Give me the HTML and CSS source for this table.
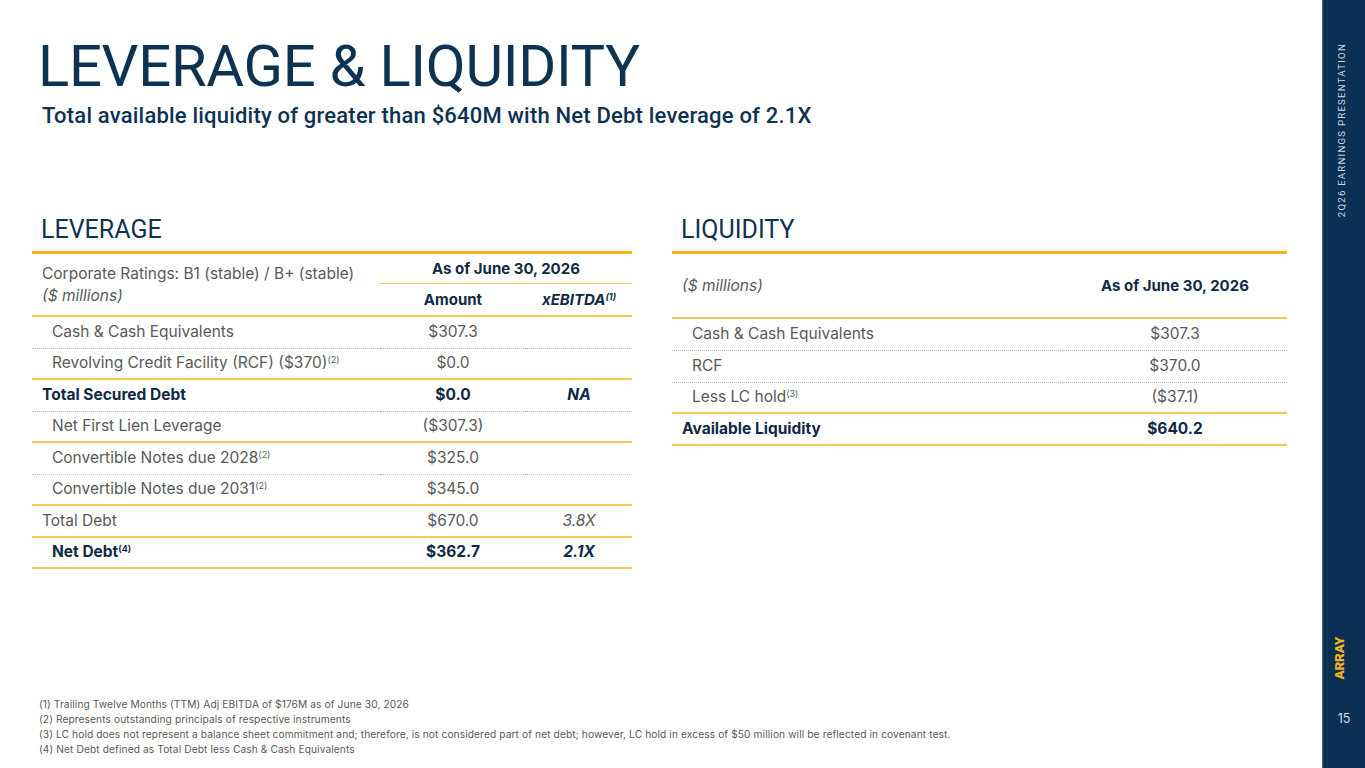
FILE: index.html
```html
<!DOCTYPE html>
<html lang="en">
<head>
<meta charset="utf-8">
<title>Leverage &amp; Liquidity</title>
<link rel="stylesheet" href="styles.css">
</head>
<body>
<div class="slide">
  <main class="content">
    <h1 class="title">LEVERAGE &amp; LIQUIDITY</h1>
    <p class="subtitle">Total available liquidity of greater than $640M with Net Debt leverage of 2.1X</p>

    <div class="panels">
      <section class="panel panel-left">
        <h2 class="panel-title">LEVERAGE</h2>
        <table class="tbl tbl-lev">
          <colgroup>
            <col class="c-label-l">
            <col class="c-amt">
            <col class="c-x">
          </colgroup>
          <thead>
            <tr class="h1row">
              <th class="hlabel" rowspan="2">
                <span class="hl-line">Corporate Ratings: B1 (stable) / B+ (stable)</span>
                <span class="hl-line hl-it">($ millions)</span>
              </th>
              <th class="asof" colspan="2">As of June 30, 2026</th>
            </tr>
            <tr class="h2row">
              <th class="hcol">Amount</th>
              <th class="hcol hcol-it">xEBITDA<sup class="fn fn-b">(1)</sup></th>
            </tr>
          </thead>
          <tbody>
            <tr class="r dot">
              <td class="lbl sub">Cash &amp; Cash Equivalents</td>
              <td class="num">$307.3</td>
              <td class="num"></td>
            </tr>
            <tr class="r gold">
              <td class="lbl sub">Revolving Credit Facility (RCF) ($370)<sup class="fn">(2)</sup></td>
              <td class="num">$0.0</td>
              <td class="num"></td>
            </tr>
            <tr class="r dot strong">
              <td class="lbl">Total Secured Debt</td>
              <td class="num">$0.0</td>
              <td class="num it">NA</td>
            </tr>
            <tr class="r gold">
              <td class="lbl sub">Net First Lien Leverage</td>
              <td class="num">($307.3)</td>
              <td class="num"></td>
            </tr>
            <tr class="r dot">
              <td class="lbl sub">Convertible Notes due 2028<sup class="fn">(2)</sup></td>
              <td class="num">$325.0</td>
              <td class="num"></td>
            </tr>
            <tr class="r gold">
              <td class="lbl sub">Convertible Notes due 2031<sup class="fn">(2)</sup></td>
              <td class="num">$345.0</td>
              <td class="num"></td>
            </tr>
            <tr class="r gold">
              <td class="lbl">Total Debt</td>
              <td class="num">$670.0</td>
              <td class="num it">3.8X</td>
            </tr>
            <tr class="r gold strong">
              <td class="lbl sub">Net Debt<sup class="fn fn-b">(4)</sup></td>
              <td class="num">$362.7</td>
              <td class="num it">2.1X</td>
            </tr>
          </tbody>
        </table>
      </section>

      <section class="panel panel-right">
        <h2 class="panel-title">LIQUIDITY</h2>
        <table class="tbl tbl-liq">
          <colgroup>
            <col class="c-label-r">
            <col class="c-val">
          </colgroup>
          <thead>
            <tr class="hrow-liq">
              <th class="hlabel"><span class="hl-it">($ millions)</span></th>
              <th class="asof-r">As of June 30, 2026</th>
            </tr>
          </thead>
          <tbody>
            <tr class="r dot">
              <td class="lbl sub">Cash &amp; Cash Equivalents</td>
              <td class="num">$307.3</td>
            </tr>
            <tr class="r dot">
              <td class="lbl sub">RCF</td>
              <td class="num">$370.0</td>
            </tr>
            <tr class="r gold">
              <td class="lbl sub">Less LC hold<sup class="fn">(3)</sup></td>
              <td class="num">($37.1)</td>
            </tr>
            <tr class="r gold strong">
              <td class="lbl">Available Liquidity</td>
              <td class="num">$640.2</td>
            </tr>
          </tbody>
        </table>
      </section>
    </div>

    <div class="footnotes">
      <p>(1) Trailing Twelve Months (TTM) Adj EBITDA of $176M as of June 30, 2026</p>
      <p>(2) Represents outstanding principals of respective instruments</p>
      <p>(3) LC hold does not represent a balance sheet commitment and; therefore, is not considered part of net debt; however, LC hold in excess of $50 million will be reflected in covenant test.</p>
      <p>(4) Net Debt defined as Total Debt less Cash &amp; Cash Equivalents</p>
    </div>
  </main>

  <aside class="sidebar">
    <div class="side-title">2Q26 EARNINGS PRESENTATION</div>
    <div class="side-logo">ARRAY</div>
    <div class="side-page">15</div>
  </aside>
</div>
</body>
</html>
```

FILE: styles.css
```css
* { box-sizing: border-box; }

html, body {
  margin: 0;
  padding: 0;
  background: #ffffff;
}

body {
  font-family: "Inter", "Roboto", "Liberation Sans", sans-serif;
  color: #595959;
}

.slide {
  width: 1365px;
  height: 768px;
  display: flex;
  overflow: hidden;
}

/* ---------- main content ---------- */
.content {
  flex: 1;
  display: flex;
  flex-direction: column;
  padding: 37px 35px 11px 32px;
}

.title {
  margin: 0;
  padding-left: 6px;
  font-family: "Roboto", "Liberation Sans", sans-serif;
  font-weight: 400;
  font-size: 58px;
  line-height: 58px;
  letter-spacing: -0.3px;
  color: #0d3353;
}

.subtitle {
  margin: 10px 0 0;
  padding-left: 10px;
  font-family: "Roboto", "Liberation Sans", sans-serif;
  font-weight: 500;
  font-size: 22px;
  line-height: 22px;
  letter-spacing: 0.2px;
  color: #0d3353;
}

.panels {
  display: flex;
  gap: 40px;
  margin-top: 90px;
}

.panel-left { width: 600px; }
.panel-right { width: 615px; }

.panel-title {
  margin: 0 0 9px;
  padding-left: 9px;
  font-family: "Roboto", "Liberation Sans", sans-serif;
  font-weight: 400;
  font-size: 25px;
  line-height: 25px;
  color: #0d3353;
}

/* ---------- tables ---------- */
.tbl {
  width: 100%;
  border-collapse: separate;
  border-spacing: 0;
  border-top: 3px solid #f4b41a;
  table-layout: fixed;
  font-size: 15.5px;
}

.c-label-l { width: 348px; }
.c-amt { width: 146px; }
.c-x { width: 106px; }
.c-label-r { width: 391px; }
.c-val { width: 224px; }

.tbl th, .tbl td {
  padding: 0;
  font-weight: 400;
}

.hlabel {
  text-align: left;
  padding-left: 10px !important;
  vertical-align: middle;
  color: #595959;
  line-height: 22px;
  border-bottom: 2px solid #f7c953;
}

.hl-line { display: block; }
.hl-it { font-style: italic; }

.h1row { height: 30px; }
.h2row { height: 33px; }

.asof {
  font-weight: 700 !important;
  font-size: 15px;
  color: #102a46;
  text-align: center;
  vertical-align: bottom;
  padding-bottom: 5px !important;
  border-bottom: 1.5px solid #f7c953;
}

.hcol {
  font-weight: 700 !important;
  font-size: 15px;
  color: #102a46;
  text-align: center;
  vertical-align: middle;
  border-bottom: 2px solid #f7c953;
}

.hcol-it { font-style: italic; }

.hrow-liq { height: 65px; }

.asof-r {
  font-weight: 700 !important;
  font-size: 15px;
  color: #102a46;
  text-align: center;
  vertical-align: middle;
  border-bottom: 2px solid #f7c953;
}

.r td {
  height: 31.5px;
  vertical-align: middle;
  line-height: 18px;
}

.tbl-liq .r td { height: 31.75px; }

.r.dot td { border-bottom: 1px dotted #b8b8b8; }
.r.gold td { border-bottom: 2px solid #f7c953; }

.lbl {
  text-align: left;
  padding-left: 10px !important;
  white-space: nowrap;
}

.lbl.sub { padding-left: 20px !important; }

.num { text-align: center; }
.it { font-style: italic; }

.strong td {
  font-weight: 700;
  color: #102a46;
}

.fn {
  font-size: 9px;
  vertical-align: 5px;
  line-height: 0;
}

.fn-b { font-weight: 700; }

/* ---------- footnotes ---------- */
.footnotes {
  margin-top: auto;
  padding-left: 7px;
  font-size: 10.2px;
  line-height: 15px;
  letter-spacing: 0.1px;
  color: #595959;
}

.footnotes p { margin: 0; }

/* ---------- sidebar ---------- */
.sidebar {
  width: 43px;
  flex: none;
  background: #0a3154;
  border-left: 1px solid #46698c;
  display: flex;
  flex-direction: column;
  align-items: center;
  padding: 43px 0 42px;
}

.side-title {
  writing-mode: vertical-rl;
  transform: rotate(180deg);
  font-family: "Roboto", "Liberation Sans", sans-serif;
  font-size: 9.6px;
  letter-spacing: 1.25px;
  line-height: 10px;
  color: #cdd8e4;
  margin-left: -4px;
  white-space: nowrap;
}

.side-logo {
  margin-top: auto;
  writing-mode: vertical-rl;
  transform: rotate(180deg);
  font-family: "Roboto", "Liberation Sans", sans-serif;
  font-weight: 900;
  font-size: 13.5px;
  line-height: 13px;
  letter-spacing: -0.2px;
  color: #f5b31c;
  margin-left: -10px;
}

.side-page {
  margin-top: 32px;
  font-family: "Inter", "Roboto", sans-serif;
  font-size: 12.5px;
  line-height: 15px;
  color: #d6dee8;
}
```
